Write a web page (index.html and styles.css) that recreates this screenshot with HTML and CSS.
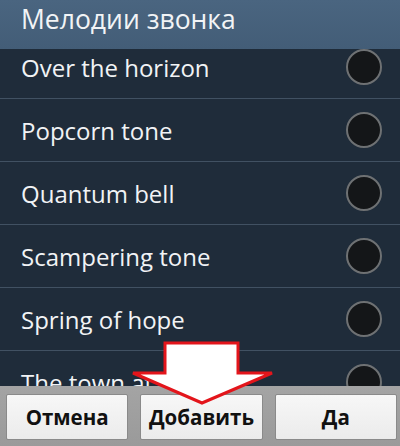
FILE: index.html
```html
<!DOCTYPE html>
<html lang="ru">
<head>
    <meta charset="UTF-8">
    <meta name="viewport" content="width=device-width, initial-scale=1.0">
    <title>Мелодии звонка</title>
    <link rel="stylesheet" href="styles.css">
</head>
<body>
    <div class="dialog">
        <div class="title">Мелодии звонка</div>

        <div class="list">
            <ul class="tones">
                <li><span>Over the horizon</span><i class="radio"></i></li>
                <li><span>Popcorn tone</span><i class="radio"></i></li>
                <li><span>Quantum bell</span><i class="radio"></i></li>
                <li><span>Scampering tone</span><i class="radio"></i></li>
                <li><span>Spring of hope</span><i class="radio"></i></li>
                <li><span>The town at dawn</span><i class="radio"></i></li>
            </ul>
        </div>

        <div class="buttons">
            <button>Отмена</button>
            <button>Добавить</button>
            <button>Да</button>
        </div>

        <!-- стрелка-подсказка -->
        <svg class="arrow" width="150" height="70" viewBox="0 0 150 70">
            <polygon points="34,2 107,2 107,32 141,32 71,62 2,32 34,32"
                     fill="#fff" stroke="#e3151b" stroke-width="3" stroke-linejoin="miter"/>
        </svg>
    </div>
</body>
</html>
```

FILE: styles.css
```css
body {
    margin: 0;
    font-family: 'Open Sans', 'Noto Sans', sans-serif;
    background-color: #1f2c3a;
}
.dialog {
    position: relative;
    width: 400px;
    height: 446px;
    display: flex;
    flex-direction: column;
    overflow: hidden;
}
.title {
    height: 49px;
    flex-shrink: 0;
    box-sizing: border-box;
    padding: 2px 0 0 21px;
    line-height: 34px;
    font-size: 26.5px;
    color: #f2f4f6;
    background: linear-gradient(#4a6580, #435d77);
}
.list {
    flex: 1;
    overflow: hidden;
    background-color: #1f2c3a;
}
.tones {
    list-style: none;
    margin: -13px 0 0 0;
    padding: 0;
}
.tones li {
    height: 62px;
    border-bottom: 1px solid #415162;
    display: flex;
    align-items: center;
    justify-content: space-between;
    padding: 0 21px;
    color: #f1f3f5;
    font-size: 24px;
}
.radio {
    width: 32px;
    height: 32px;
    border-radius: 50%;
    border: 2px solid #6e7173;
    background-color: #141618;
    margin-right: -3px;
}
.buttons {
    flex-shrink: 0;
    height: 60px;
    box-sizing: border-box;
    padding: 8px 3px 6px 6px;
    display: flex;
    gap: 12px;
    background: linear-gradient(#a4a4a4, #9a9a9a);
}
.buttons button {
    flex: 1;
    border: 1px solid #8a8a8a;
    border-radius: 2px;
    background: linear-gradient(#f7f7f7, #ebebeb);
    font-family: 'Open Sans', 'Noto Sans', sans-serif;
    font-weight: bold;
    font-size: 20.5px;
    color: #111;
    padding: 0;
}
.arrow {
    position: absolute;
    left: 131px;
    top: 341px;
}
```
